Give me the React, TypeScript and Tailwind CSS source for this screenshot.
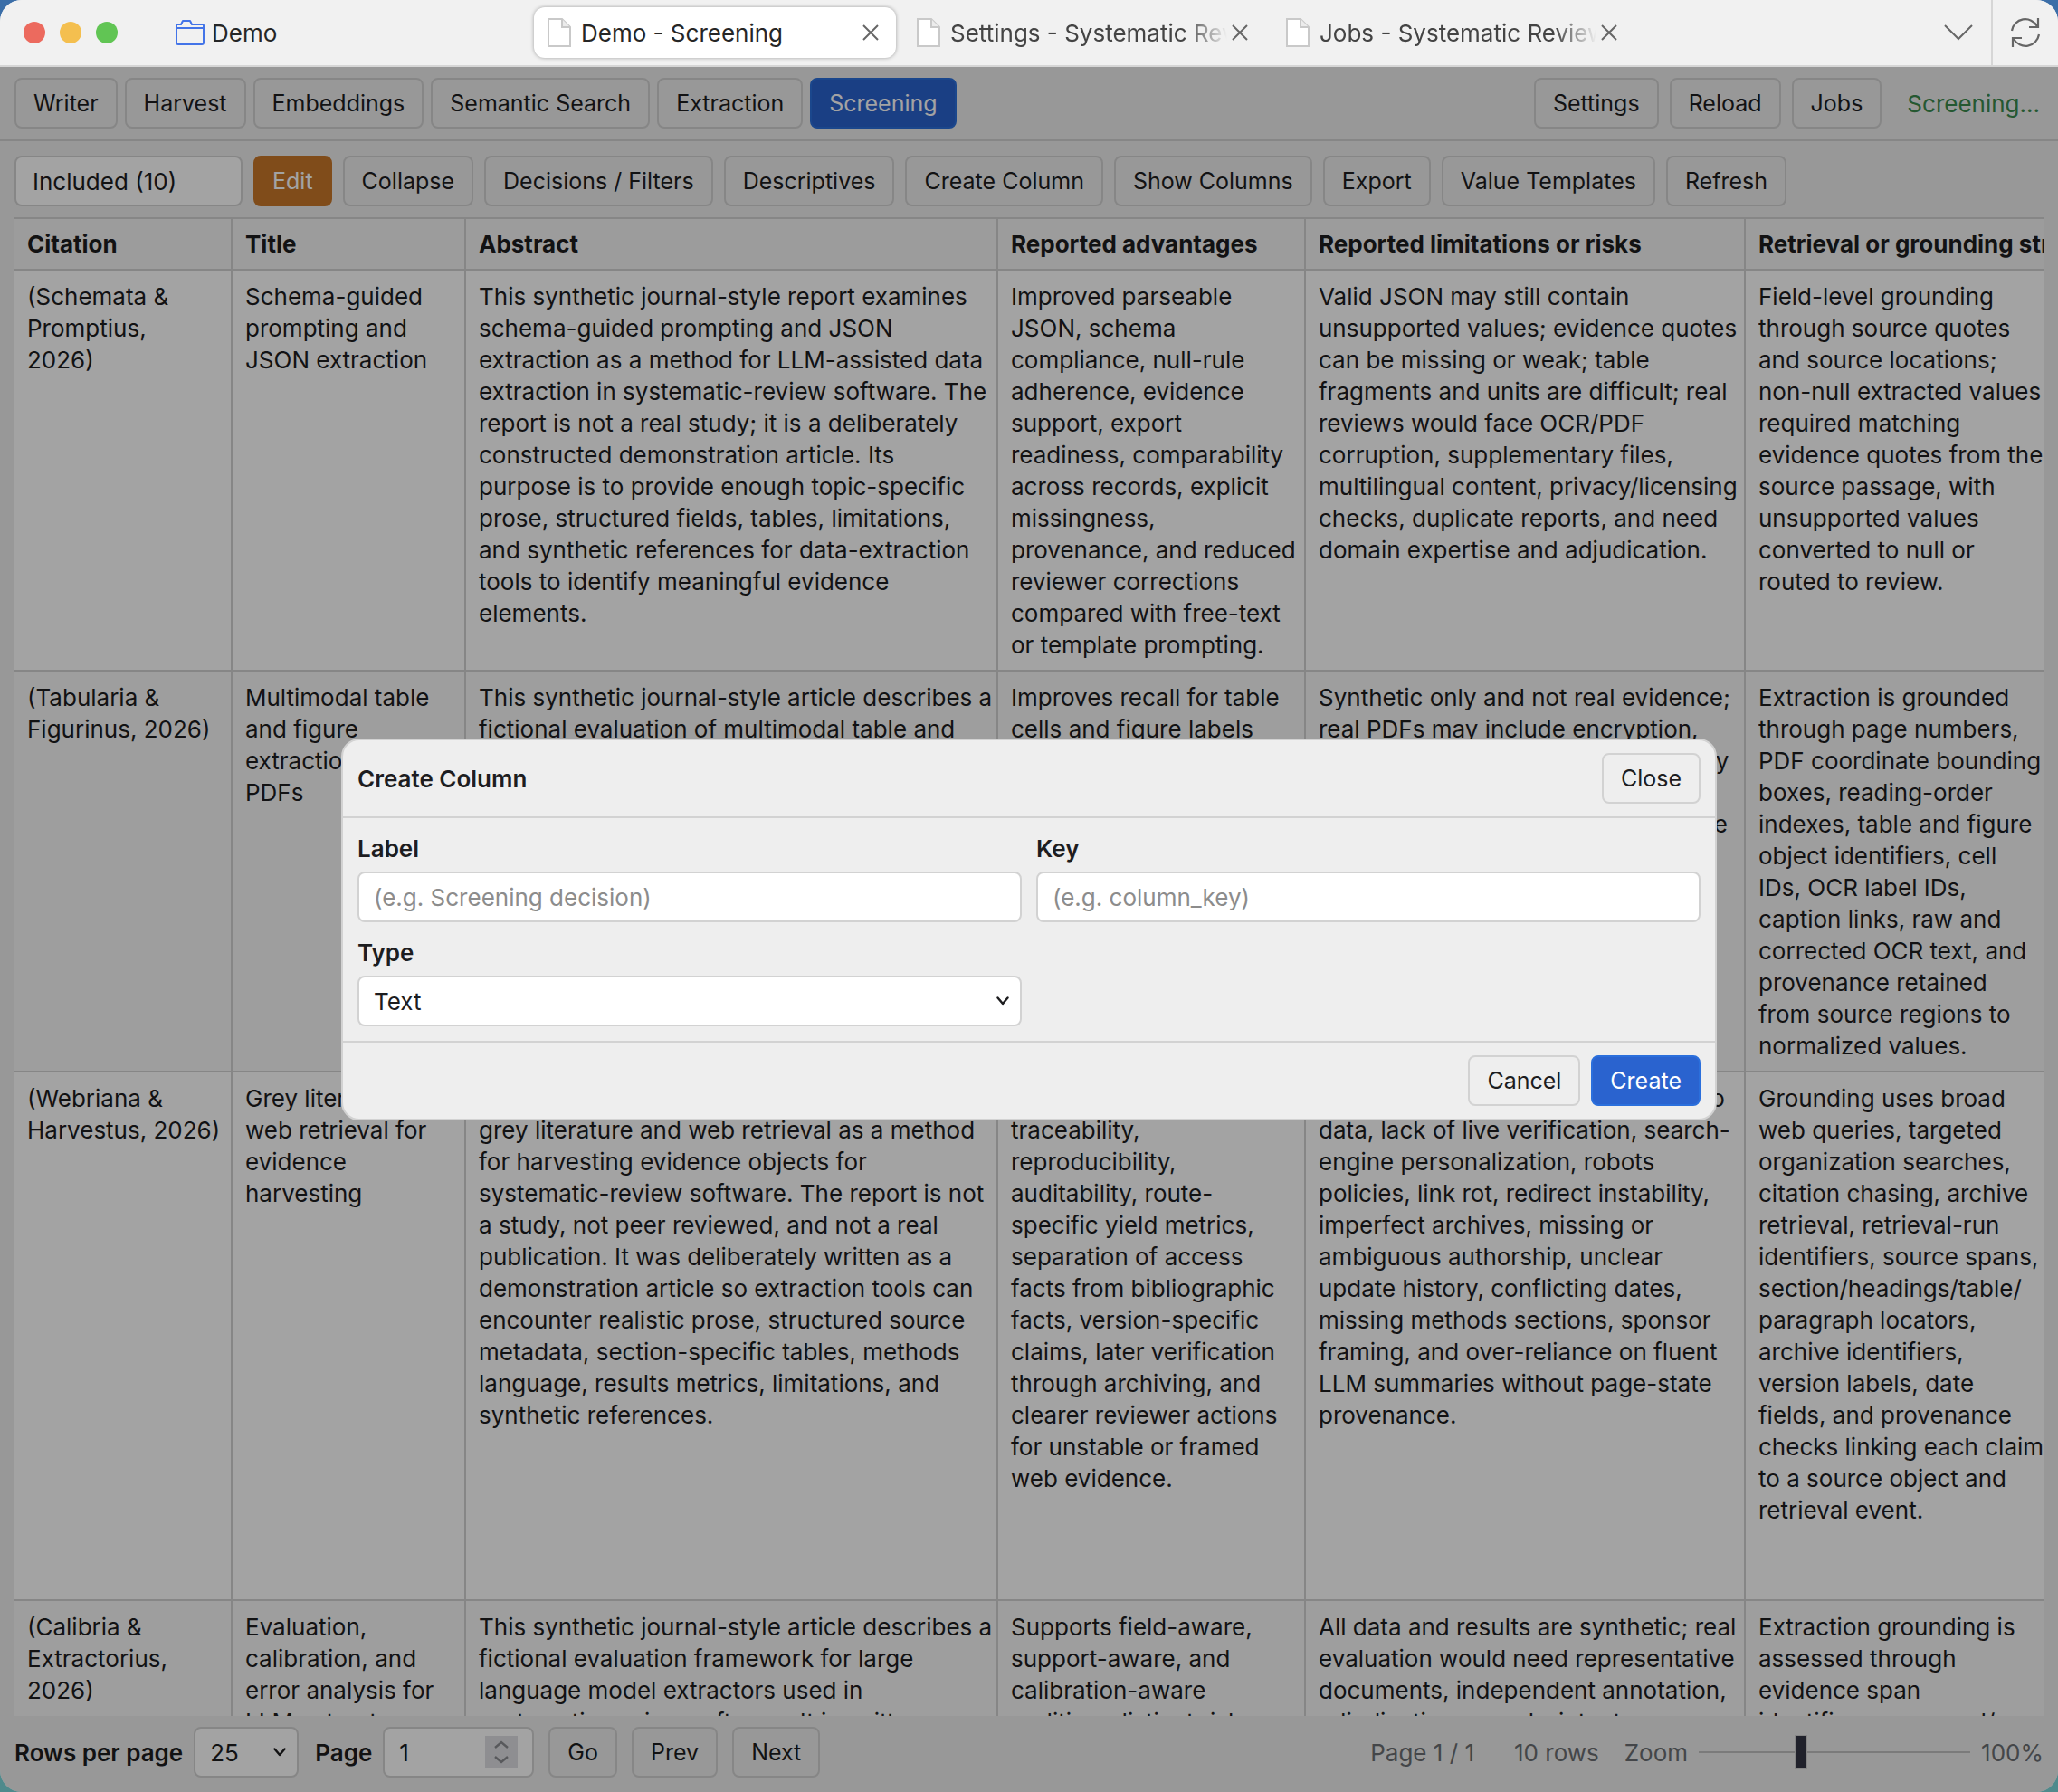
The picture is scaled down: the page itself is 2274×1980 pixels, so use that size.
const navItems = ["Writer", "Harvest", "Embeddings", "Semantic Search", "Extraction"];
const actions = ["Collapse", "Decisions / Filters", "Descriptives", "Create Column", "Show Columns", "Export", "Value Templates", "Refresh"];

const columns = ["Citation", "Title", "Abstract", "Reported advantages", "Reported limitations or risks", "Retrieval or grounding strategy"];

const rows = [
  {
    height: "h-[443px]",
    cells: [
      "(Schemata &\nPromptius,\n2026)",
      "Schema-guided\nprompting and\nJSON extraction",
      "This synthetic journal-style report examines\nschema-guided prompting and JSON\nextraction as a method for LLM-assisted data\nextraction in systematic-review software. The\nreport is not a real study; it is a deliberately\nconstructed demonstration article. Its\npurpose is to provide enough topic-specific\nprose, structured fields, tables, limitations,\nand synthetic references for data-extraction\ntools to identify meaningful evidence\nelements.",
      "Improved parseable\nJSON, schema\ncompliance, null-rule\nadherence, evidence\nsupport, export\nreadiness, comparability\nacross records, explicit\nmissingness,\nprovenance, and reduced\nreviewer corrections\ncompared with free-text\nor template prompting.",
      "Valid JSON may still contain\nunsupported values; evidence quotes\ncan be missing or weak; table\nfragments and units are difficult; real\nreviews would face OCR/PDF\ncorruption, supplementary files,\nmultilingual content, privacy/licensing\nchecks, duplicate reports, and need\ndomain expertise and adjudication.",
      "Field-level grounding\nthrough source quotes\nand source locations;\nnon-null extracted values\nrequired matching\nevidence quotes from the\nsource passage, with\nunsupported values\nconverted to null or\nrouted to review.",
    ],
  },
  {
    height: "h-[443px]",
    cells: [
      "(Tabularia &\nFigurinus, 2026)",
      "Multimodal table\nand figure\nextraction from\nPDFs",
      "This synthetic journal-style article describes a\nfictional evaluation of multimodal table and\nfigure extraction from scholarly PDFs.",
      "Improves recall for table\ncells and figure labels",
      "Synthetic only and not real evidence;\nreal PDFs may include encryption,\nbroken text layers, notes, low-quality\nfigures, and rotated tables;\nvalidation would need representative\ndocuments.",
      "Extraction is grounded\nthrough page numbers,\nPDF coordinate bounding\nboxes, reading-order\nindexes, table and figure\nobject identifiers, cell\nIDs, OCR label IDs,\ncaption links, raw and\ncorrected OCR text, and\nprovenance retained\nfrom source regions to\nnormalized values.",
    ],
  },
  {
    height: "h-[584px]",
    cells: [
      "(Webriana &\nHarvestus, 2026)",
      "Grey literature and\nweb retrieval for\nevidence\nharvesting",
      "This synthetic journal-style report examines\ngrey literature and web retrieval as a method\nfor harvesting evidence objects for\nsystematic-review software. The report is not\na study, not peer reviewed, and not a real\npublication. It was deliberately written as a\ndemonstration article so extraction tools can\nencounter realistic prose, structured source\nmetadata, section-specific tables, methods\nlanguage, results metrics, limitations, and\nsynthetic references.",
      "Improved source\ntraceability,\nreproducibility,\nauditability, route-\nspecific yield metrics,\nseparation of access\nfacts from bibliographic\nfacts, version-specific\nclaims, later verification\nthrough archiving, and\nclearer reviewer actions\nfor unstable or framed\nweb evidence.",
      "Limitations include reliance on demo\ndata, lack of live verification, search-\nengine personalization, robots\npolicies, link rot, redirect instability,\nimperfect archives, missing or\nambiguous authorship, unclear\nupdate history, conflicting dates,\nmissing methods sections, sponsor\nframing, and over-reliance on fluent\nLLM summaries without page-state\nprovenance.",
      "Grounding uses broad\nweb queries, targeted\norganization searches,\ncitation chasing, archive\nretrieval, retrieval-run\nidentifiers, source spans,\nsection/headings/table/\nparagraph locators,\narchive identifiers,\nversion labels, date\nfields, and provenance\nchecks linking each claim\nto a source object and\nretrieval event.",
    ],
  },
  {
    height: "h-[443px]",
    cells: [
      "(Calibria &\nExtractorius,\n2026)",
      "Evaluation,\ncalibration, and\nerror analysis for\nLLM extractors",
      "This synthetic journal-style article describes a\nfictional evaluation framework for large\nlanguage model extractors used in\nsystematic-review software. It is written",
      "Supports field-aware,\nsupport-aware, and\ncalibration-aware\nauditing, distinct risk",
      "All data and results are synthetic; real\nevaluation would need representative\ndocuments, independent annotation,\nadjudication, sample-intent,",
      "Extraction grounding is\nassessed through\nevidence span\nidentifiers, page and/or",
    ],
  },
];

function Button({ children, tone = "plain" }: { children: string; tone?: "plain" | "blue" | "orange" }) {
  const tones = {
    plain: "border-[#d2d2d2] text-[#1d1d1f]",
    blue: "border-[#2b6fdc] bg-[#2a63cf] text-white",
    orange: "border-[#c8782a] bg-[#c8782a] text-white",
  };
  return (
    <button className={`h-14 shrink-0 whitespace-nowrap rounded-lg border-2 px-[19px] text-[25px] ${tones[tone]}`}>
      {children}
    </button>
  );
}

function Chevron() {
  return (
    <svg viewBox="0 0 14 10" className="pointer-events-none -ml-7 h-[10px] w-[14px] shrink-0" fill="none" stroke="#1d1d1f" strokeWidth="2.4" strokeLinecap="round" strokeLinejoin="round">
      <path d="M1.5 1.5 7 8l5.500-6.500" />
    </svg>
  );
}

function FileIcon() {
  return (
    <svg viewBox="0 0 26 32" className="h-8 w-[26px] shrink-0" fill="#fff" stroke="#c9c9c9" strokeWidth="2">
      <path d="M1 1h15l9 9v21H1z" />
      <path d="M16 1v9h9" fill="#ececec" />
    </svg>
  );
}

function Tab({ title, active = false }: { title: string; active?: boolean }) {
  return (
    <div className={`flex h-14 w-[400px] items-center rounded-xl pl-[15px] pr-[18px] ${active ? "bg-white text-[#262626] shadow-[0_0_4px_rgba(0,0,0,0.35)]" : "text-[#444]"}`}>
      <FileIcon />
      <span className={`ml-[11px] flex-1 overflow-hidden whitespace-nowrap ${active ? "" : "[mask-image:linear-gradient(to_right,#000_85%,transparent)]"}`}>{title}</span>
      <button aria-label="Close tab" className="ml-1 flex size-5 items-center justify-center">
        <svg viewBox="0 0 18 18" className="size-[18px]" fill="none" stroke="#666" strokeWidth="2">
          <path d="M1 1l16 16M17 1 1 17" />
        </svg>
      </button>
    </div>
  );
}

function TitleBar() {
  return (
    <header className="flex h-[74px] shrink-0 items-center border-b-2 border-[#d6d6d6] bg-[#f1f1f1]">
      <div className="flex w-[590px] shrink-0 items-center pl-[26px]">
        <div className="flex gap-4">
          <span className="size-6 rounded-full bg-[#ec6a5e]" />
          <span className="size-6 rounded-full bg-[#f4bf4f]" />
          <span className="size-6 rounded-full bg-[#61c554]" />
        </div>
        <svg viewBox="0 0 32 28" className="ml-16 h-7 w-8" fill="none" stroke="#4374e8" strokeWidth="2" strokeLinejoin="round">
          <path d="M1 25V6q0-1 1-1h4l2-4h8l2 4h12q1 0 1 1v19q0 2-2 2H3q-2 0-2-2zM1 9h30" />
        </svg>
        <span className="ml-2 text-[#262626]">Demo</span>
      </div>
      <div className="flex flex-1 gap-2">
        <Tab title="Demo - Screening" active />
        <Tab title="Settings - Systematic Review" />
        <Tab title="Jobs - Systematic Review" />
      </div>
      <button aria-label="All tabs" className="mr-5">
        <svg viewBox="0 0 32 18" className="h-[18px] w-8" fill="none" stroke="#666" strokeWidth="2">
          <path d="M1 1l15 15L31 1" />
        </svg>
      </button>
      <button aria-label="Sync" className="flex h-full w-[74px] items-center justify-center border-l-2 border-[#d6d6d6]">
        <svg viewBox="0 0 32 32" className="size-8" fill="none" stroke="#666" strokeWidth="2.200">
          <path d="M1 14A15 15 0 0 1 29 9M30 0v10H20M31 18A15 15 0 0 1 3 23M2 32V22h10" />
        </svg>
      </button>
    </header>
  );
}

function Grid() {
  return (
    <div className="min-h-0 flex-1 overflow-hidden">
      <table className="w-[2600px] table-fixed border-separate border-spacing-0">
        <colgroup>
          <col className="w-[241px]" />
          <col className="w-[258px]" />
          <col className="w-[588px]" />
          <col className="w-[340px]" />
          <col className="w-[486px]" />
          <col />
        </colgroup>
        <thead>
          <tr className="h-[59px] bg-[#f5f5f5]">
            {columns.map(name => (
              <th key={name} className="whitespace-nowrap border-b-2 border-r-2 border-t-2 border-[#d2d2d2] px-[14px] text-left font-bold">
                {name}
              </th>
            ))}
          </tr>
        </thead>
        <tbody>
          {rows.map((row, i) => (
            <tr key={i} className={`${row.height} ${i % 2 ? "bg-[#f8f8f8]" : "bg-white"}`}>
              {row.cells.map((text, j) => (
                <td key={j} className="whitespace-pre border-b-2 border-r-2 border-[#d2d2d2] px-[14px] pt-[11px] align-top">
                  {text}
                </td>
              ))}
            </tr>
          ))}
        </tbody>
      </table>
    </div>
  );
}

function Footer() {
  return (
    <footer className="flex h-[84px] shrink-0 items-center justify-between pb-1">
      <div className="flex items-center gap-4">
        <div className="flex items-center gap-3">
          <label htmlFor="rows" className="font-semibold">Rows per page</label>
          <div className="flex items-center">
            <select id="rows" className="h-14 w-[116px] appearance-none rounded-lg border-2 border-[#d2d2d2] bg-white px-4">
              <option>25</option>
            </select>
            <Chevron />
          </div>
        </div>
        <div className="ml-4 flex items-center gap-3">
          <label htmlFor="page" className="font-semibold">Page</label>
          <div className="flex h-14 w-[167px] items-center rounded-lg border-2 border-[#d2d2d2] bg-white px-4">
            <input id="page" type="number" defaultValue="1" className="w-0 flex-1 appearance-none bg-transparent outline-none [-moz-appearance:textfield] [&::-webkit-inner-spin-button]:appearance-none" />
            <svg viewBox="0 0 36 36" className="h-9 w-9 shrink-0 bg-[#dedfe3]" fill="none" stroke="#8a8b90" strokeWidth="2.400">
              <path d="M11 13l7-6 7 6M11 23l7 6 7-6" />
            </svg>
          </div>
        </div>
        <Button>Go</Button>
        <Button>Prev</Button>
        <Button>Next</Button>
      </div>
      <div className="flex items-center text-[#6b6e72]">
        <span>Page 1 / 1</span>
        <span className="ml-11">10 rows</span>
        <label htmlFor="zoom" className="ml-7">Zoom</label>
        <input
          id="zoom"
          type="range"
          min="0"
          max="100"
          defaultValue="37"
          className="mx-3 h-10 w-[300px] appearance-none bg-transparent [&::-webkit-slider-runnable-track]:h-[2px] [&::-webkit-slider-runnable-track]:bg-[#c0c0c0] [&::-webkit-slider-thumb]:-mt-[18px] [&::-webkit-slider-thumb]:h-[38px] [&::-webkit-slider-thumb]:w-[14px] [&::-webkit-slider-thumb]:appearance-none [&::-webkit-slider-thumb]:border [&::-webkit-slider-thumb]:border-[#d2d2d2] [&::-webkit-slider-thumb]:bg-[#323544]"
        />
        <span>100%</span>
      </div>
    </footer>
  );
}

function CreateColumnDialog() {
  const field = "h-14 w-full rounded-lg border-2 border-[#d2d2d2] bg-white px-4 placeholder:text-[#8c8c8c]";
  return (
    <div className="absolute inset-0 flex items-center justify-center bg-black/36">
      <div role="dialog" aria-label="Create Column" className="w-[1520px] overflow-hidden rounded-[20px] border-2 border-[#d2d2d2] bg-[#eee]">
        <div className="flex items-center justify-between border-b-2 border-[#d2d2d2] px-4 py-[14px]">
          <h2 className="font-semibold">Create Column</h2>
          <Button>Close</Button>
        </div>
        <div className="grid grid-cols-2 gap-4 p-4">
          <div className="flex flex-col gap-2">
            <label htmlFor="label" className="font-semibold">Label</label>
            <input id="label" placeholder="(e.g. Screening decision)" className={field} />
          </div>
          <div className="flex flex-col gap-2">
            <label htmlFor="key" className="font-semibold">Key</label>
            <input id="key" placeholder="(e.g. column_key)" className={field} />
          </div>
          <div className="flex flex-col gap-2">
            <label htmlFor="type" className="font-semibold">Type</label>
            <div className="flex items-center">
              <select id="type" className={`${field} appearance-none`}>
                <option>Text</option>
              </select>
              <Chevron />
            </div>
          </div>
        </div>
        <div className="flex justify-end gap-3 border-t-2 border-[#d2d2d2] px-4 py-[14px]">
          <Button>Cancel</Button>
          <Button tone="blue">Create</Button>
        </div>
      </div>
    </div>
  );
}

export default function App() {
  return (
    <div className="h-screen bg-[linear-gradient(to_bottom,#3b6ea8,#4f8a8c)] font-['Inter',sans-serif] text-[26px] leading-[35px] text-[#1d1d1f]">
      <div className="flex h-full flex-col overflow-hidden rounded-[24px] bg-[#eee]">
        <TitleBar />
        <main className="relative flex min-h-0 flex-1 flex-col">
          <nav className="flex shrink-0 items-center gap-2 border-b-2 border-[#d2d2d2] px-4 py-3">
            {navItems.map(item => (
              <Button key={item}>{item}</Button>
            ))}
            <Button tone="blue">Screening</Button>
            <div className="ml-auto flex items-center gap-3">
              <Button>Settings</Button>
              <Button>Reload</Button>
              <Button>Jobs</Button>
              <span className="ml-4 mr-1 text-[#3a8a4e]">Screening...</span>
            </div>
          </nav>
          <div className="flex min-h-0 flex-1 flex-col px-4 pt-4">
            <div className="mb-3 flex shrink-0 items-center gap-3">
              <select aria-label="Decision" className="h-14 w-[252px] appearance-none rounded-lg border-2 border-[#d2d2d2] bg-white px-[18px]">
                <option>Included (10)</option>
              </select>
              <Button tone="orange">Edit</Button>
              {actions.map(item => (
                <Button key={item}>{item}</Button>
              ))}
            </div>
            <Grid />
            <Footer />
          </div>
          <CreateColumnDialog />
        </main>
      </div>
    </div>
  );
}
